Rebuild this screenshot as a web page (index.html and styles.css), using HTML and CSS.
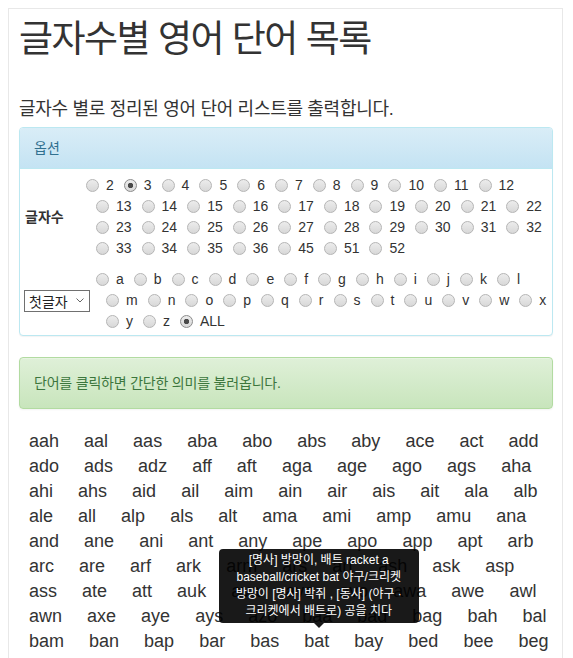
FILE: index.html
```html
<!DOCTYPE html>
<html lang="ko">
<head>
<meta charset="utf-8">
<title>글자수별 영어 단어 목록</title>
<link rel="stylesheet" href="styles.css">
</head>
<body>
<div class="page">
  <h1 class="title">글자수별 영어 단어 목록</h1>
  <p class="lead">글자수 별로 정리된 영어 단어 리스트를 출력합니다.</p>

  <div class="panel">
    <div class="panel-heading">옵션</div>
    <div class="panel-body">
      <div class="opt-row opt-row--len">
        <div class="opt-label"><span class="opt-title">글자수</span></div>
        <div class="radio-list">
          <label class="radio"><input type="radio" name="len">2</label><label class="radio"><input type="radio" name="len" checked>3</label><label class="radio"><input type="radio" name="len">4</label><label class="radio"><input type="radio" name="len">5</label><label class="radio"><input type="radio" name="len">6</label><label class="radio"><input type="radio" name="len">7</label><label class="radio"><input type="radio" name="len">8</label><label class="radio"><input type="radio" name="len">9</label><label class="radio"><input type="radio" name="len">10</label><label class="radio"><input type="radio" name="len">11</label><label class="radio"><input type="radio" name="len">12</label><label class="radio"><input type="radio" name="len">13</label><label class="radio"><input type="radio" name="len">14</label><label class="radio"><input type="radio" name="len">15</label><label class="radio"><input type="radio" name="len">16</label><label class="radio"><input type="radio" name="len">17</label><label class="radio"><input type="radio" name="len">18</label><label class="radio"><input type="radio" name="len">19</label><label class="radio"><input type="radio" name="len">20</label><label class="radio"><input type="radio" name="len">21</label><label class="radio"><input type="radio" name="len">22</label><label class="radio"><input type="radio" name="len">23</label><label class="radio"><input type="radio" name="len">24</label><label class="radio"><input type="radio" name="len">25</label><label class="radio"><input type="radio" name="len">26</label><label class="radio"><input type="radio" name="len">27</label><label class="radio"><input type="radio" name="len">28</label><label class="radio"><input type="radio" name="len">29</label><label class="radio"><input type="radio" name="len">30</label><label class="radio"><input type="radio" name="len">31</label><label class="radio"><input type="radio" name="len">32</label><label class="radio"><input type="radio" name="len">33</label><label class="radio"><input type="radio" name="len">34</label><label class="radio"><input type="radio" name="len">35</label><label class="radio"><input type="radio" name="len">36</label><label class="radio"><input type="radio" name="len">45</label><label class="radio"><input type="radio" name="len">51</label><label class="radio"><input type="radio" name="len">52</label>
        </div>
      </div>
      <div class="opt-row opt-row--first">
        <div class="opt-label">
          <span class="select-box">
            <select class="select"><option>첫글자</option><option>끝글자</option></select>
            <svg class="chevron" width="8" height="5" viewBox="0 0 8 5" aria-hidden="true"><path d="M0.5 0.5 L4 4 L7.5 0.5" fill="none" stroke="#666" stroke-width="1"/></svg>
          </span>
        </div>
        <div class="radio-list">
          <label class="radio"><input type="radio" name="first">a</label><label class="radio"><input type="radio" name="first">b</label><label class="radio"><input type="radio" name="first">c</label><label class="radio"><input type="radio" name="first">d</label><label class="radio"><input type="radio" name="first">e</label><label class="radio"><input type="radio" name="first">f</label><label class="radio"><input type="radio" name="first">g</label><label class="radio"><input type="radio" name="first">h</label><label class="radio"><input type="radio" name="first">i</label><label class="radio"><input type="radio" name="first">j</label><label class="radio"><input type="radio" name="first">k</label><label class="radio"><input type="radio" name="first">l</label><label class="radio"><input type="radio" name="first">m</label><label class="radio"><input type="radio" name="first">n</label><label class="radio"><input type="radio" name="first">o</label><label class="radio"><input type="radio" name="first">p</label><label class="radio"><input type="radio" name="first">q</label><label class="radio"><input type="radio" name="first">r</label><label class="radio"><input type="radio" name="first">s</label><label class="radio"><input type="radio" name="first">t</label><label class="radio"><input type="radio" name="first">u</label><label class="radio"><input type="radio" name="first">v</label><label class="radio"><input type="radio" name="first">w</label><label class="radio"><input type="radio" name="first">x</label><label class="radio"><input type="radio" name="first">y</label><label class="radio"><input type="radio" name="first">z</label><label class="radio"><input type="radio" name="first" checked>ALL</label>
        </div>
      </div>
    </div>
  </div>

  <div class="alert">단어를 클릭하면 간단한 의미를 불러옵니다.</div>

  <div class="words">
    <a class="word">aah</a> <a class="word">aal</a> <a class="word">aas</a> <a class="word">aba</a> <a class="word">abo</a> <a class="word">abs</a> <a class="word">aby</a> <a class="word">ace</a> <a class="word">act</a> <a class="word">add</a>
    <a class="word">ado</a> <a class="word">ads</a> <a class="word">adz</a> <a class="word">aff</a> <a class="word">aft</a> <a class="word">aga</a> <a class="word">age</a> <a class="word">ago</a> <a class="word">ags</a> <a class="word">aha</a>
    <a class="word">ahi</a> <a class="word">ahs</a> <a class="word">aid</a> <a class="word">ail</a> <a class="word">aim</a> <a class="word">ain</a> <a class="word">air</a> <a class="word">ais</a> <a class="word">ait</a> <a class="word">ala</a> <a class="word">alb</a>
    <a class="word">ale</a> <a class="word">all</a> <a class="word">alp</a> <a class="word">als</a> <a class="word">alt</a> <a class="word">ama</a> <a class="word">ami</a> <a class="word">amp</a> <a class="word">amu</a> <a class="word">ana</a>
    <a class="word">and</a> <a class="word">ane</a> <a class="word">ani</a> <a class="word">ant</a> <a class="word">any</a> <a class="word">ape</a> <a class="word">apo</a> <a class="word">app</a> <a class="word">apt</a> <a class="word">arb</a>
    <a class="word">arc</a> <a class="word">are</a> <a class="word">arf</a> <a class="word">ark</a> <a class="word">arm</a> <a class="word">ars</a> <a class="word">art</a> <a class="word">ash</a> <a class="word">ask</a> <a class="word">asp</a>
    <a class="word">ass</a> <a class="word">ate</a> <a class="word">att</a> <a class="word">auk</a> <a class="word">ava</a> <a class="word">ave</a> <a class="word">avo</a> <a class="word">awa</a> <a class="word">awe</a> <a class="word">awl</a>
    <a class="word">awn</a> <a class="word">axe</a> <a class="word">aye</a> <a class="word">ays</a> <a class="word">azo</a> <a class="word">baa</a> <a class="word">bad</a> <a class="word">bag</a> <a class="word">bah</a> <a class="word">bal</a>
    <a class="word">bam</a> <a class="word">ban</a> <a class="word">bap</a> <a class="word">bar</a> <a class="word">bas</a> <a class="word word--active">bat<span class="tip" role="tooltip">[명사] 방망이, 배트 racket a baseball/cricket bat 야구/크리켓 방망이 [명사] 박쥐 , [동사] (야구 · 크리켓에서 배트로) 공을 치다</span></a> <a class="word">bay</a> <a class="word">bed</a> <a class="word">bee</a> <a class="word">beg</a>
    <a class="word">bel</a> <a class="word">ben</a> <a class="word">bes</a> <a class="word">bet</a> <a class="word">bey</a> <a class="word">bib</a> <a class="word">bid</a> <a class="word">big</a> <a class="word">bin</a> <a class="word">bio</a>
    <a class="word">bis</a> <a class="word">bit</a> <a class="word">biz</a> <a class="word">boa</a> <a class="word">bob</a> <a class="word">bod</a> <a class="word">bog</a> <a class="word">boo</a> <a class="word">bop</a> <a class="word">bos</a>
  </div>
</div>
</body>
</html>
```

FILE: styles.css
```css
* {
  box-sizing: border-box;
}

body {
  margin: 8px;
  font-family: "Liberation Sans", "Noto Sans CJK KR", sans-serif;
  font-size: 14px;
  line-height: 20px;
  color: #333;
  background: #fff;
}

.page {
  margin-right: 2px;
  min-height: 720px;
  border: 1px solid #e8e8e8;
  border-bottom: none;
  padding: 0 0 20px 10px;
}

.title {
  margin: 11px 0 0;
  font-size: 37px;
  line-height: 40px;
  font-weight: 400;
  letter-spacing: -1.5px;
  color: #333;
}

.lead {
  margin: 36px 0 5px;
  font-size: 18px;
  line-height: 26px;
  font-weight: 400;
  letter-spacing: -0.3px;
}

/* panel */
.panel {
  margin: 0 9px 21px 0;
  border: 1px solid #bce8f1;
  border-radius: 4px;
  background: #fff;
  box-shadow: 0 1px 1px rgba(0, 0, 0, 0.05);
}

.panel-heading {
  padding: 10px 14px;
  border-bottom: 1px solid #bce8f1;
  border-radius: 3px 3px 0 0;
  background: linear-gradient(to bottom, #d9edf7 0%, #c4e3f3 100%);
  color: #31708f;
}

.panel-body {
  display: flex;
  flex-direction: column;
  gap: 10px;
  padding: 6px 0 3px 5px;
}

.opt-row {
  display: grid;
  align-items: center;
}

.opt-row--len {
  grid-template-columns: 61px 1fr;
}

.opt-row--first {
  grid-template-columns: 71px 1fr;
}

.opt-title {
  font-weight: 700;
}

.select-box {
  display: inline-flex;
  align-items: center;
  width: 66px;
  height: 22px;
  margin-left: -1px;
  padding: 0 5px 0 4px;
  border: 1px solid #707070;
  background: #fff;
}

.select {
  -webkit-appearance: none;
  appearance: none;
  flex: 1;
  min-width: 0;
  margin: 0;
  padding: 0;
  border: none;
  background: transparent;
  font-family: "Noto Sans CJK KR", sans-serif;
  font-size: 14px;
  line-height: 20px;
  color: #222;
  outline: none;
}

.chevron {
  flex: none;
  display: block;
}

.radio-list {
  display: flex;
  flex-wrap: wrap;
}

.radio {
  position: relative;
  height: 21px;
  line-height: 21px;
  padding-left: 20px;
  color: #333;
  white-space: nowrap;
}

.radio + .radio {
  margin-left: 10px;
}

.radio input {
  -webkit-appearance: none;
  appearance: none;
  position: absolute;
  left: 0;
  top: 4px;
  width: 13px;
  height: 13px;
  margin: 0;
  border: 1px solid #b5b5b5;
  border-radius: 50%;
  background: linear-gradient(to bottom, #ececec, #d8d8d8);
}

.radio input:checked {
  border-color: #8c8c8c;
  background:
    radial-gradient(circle, #4a4a4a 0 2.4px, transparent 3px),
    linear-gradient(to bottom, #ececec, #d8d8d8);
}

/* alert */
.alert {
  margin: 0 9px 20px 0;
  padding: 15px 14px;
  border: 1px solid #b2dba1;
  border-radius: 4px;
  background: linear-gradient(to bottom, #dff0d8 0%, #c8e5bc 100%);
  box-shadow: inset 0 1px 0 rgba(255, 255, 255, 0.25), 0 1px 2px rgba(0, 0, 0, 0.05);
  color: #3c763d;
  letter-spacing: -0.2px;
}

/* words */
.words {
  font-size: 18px;
  line-height: 25px;
}

.word {
  position: relative;
  margin: 0 10px;
  color: #333;
  text-decoration: none;
  cursor: pointer;
}

.tip {
  position: absolute;
  left: 50%;
  bottom: calc(100% + 8px);
  z-index: 5;
  width: 200px;
  margin-left: -98px;
  padding: 3px 8px;
  border-radius: 4px;
  background: rgba(0, 0, 0, 0.9);
  color: #fff;
  font-size: 12px;
  line-height: 17px;
  text-align: center;
  white-space: normal;
  word-break: keep-all;
}

.tip::after {
  content: "";
  position: absolute;
  top: 100%;
  left: 50%;
  margin-left: -5px;
  border-width: 5px 5px 0;
  border-style: solid;
  border-color: rgba(0, 0, 0, 0.9) transparent transparent;
}
```
